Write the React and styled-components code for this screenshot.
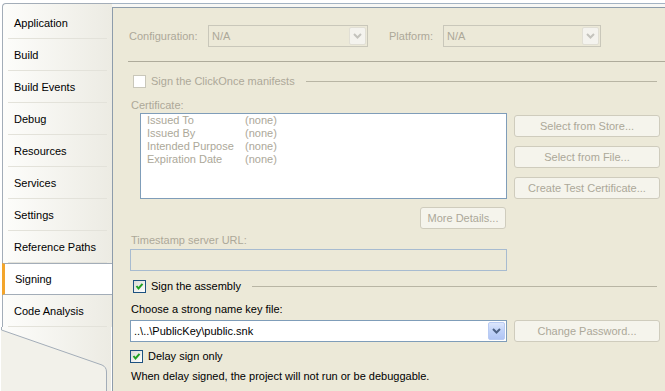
import styled, { createGlobalStyle } from "styled-components";

const GlobalStyle = createGlobalStyle`
  html, body {
    margin: 0;
    padding: 0;
    background: #ffffff;
  }
  body {
    font-family: "Liberation Sans", Arial, sans-serif;
    font-size: 11px;
    color: #000;
  }
`;

const tabs = [
  "Application",
  "Build",
  "Build Events",
  "Debug",
  "Resources",
  "Services",
  "Settings",
  "Reference Paths",
  "Signing",
  "Code Analysis",
];

const certFields = ["Issued To", "Issued By", "Intended Purpose", "Expiration Date"];

const Chevron = ({ color }) => (
  <svg width="9" height="6" viewBox="0 0 9 6">
    <path d="M1 1 L4.5 4.5 L8 1" fill="none" stroke={color} strokeWidth="2" />
  </svg>
);

const Check = () => (
  <svg width="11" height="11" viewBox="0 0 11 11">
    <path d="M2.5 5 L4.5 7.5 L8.5 2.8" fill="none" stroke="#21a121" strokeWidth="2" />
  </svg>
);

const SidebarFoot = () => (
  <svg width="110" height="64" viewBox="0 0 110 64">
    <defs>
      <linearGradient id="sideGrad" x1="0" x2="1" y1="0" y2="0">
        <stop offset="0" stopColor="#fdfdfb" />
        <stop offset="1" stopColor="#ecebe3" />
      </linearGradient>
    </defs>
    <rect x="0" y="0" width="110" height="64" fill="#f2f1ea" />
    <path d="M0 0 H110 V64 H105.5 V45 Q105.5 40 101 38 L0.5 3 Z" fill="url(#sideGrad)" />
    <path d="M0.5 0 V3 L101 38 Q105.5 40 105.5 45 V64" fill="none" stroke="#a3adb8" strokeWidth="1" />
  </svg>
);

const App = () => {
  return (
    <>
      <GlobalStyle />
      <Window>
        <Sidebar>
          <TabList>
            {tabs.map((t) => (
              <Tab key={t} $active={t === "Signing"}>
                {t}
              </Tab>
            ))}
          </TabList>
          <SidebarTail>
            <SidebarFoot />
          </SidebarTail>
        </Sidebar>

        <Main>
          <Panel>
            <ConfigRow>
              <Label $disabled $width={79}>Configuration:</Label>
              <Combo $width={160} $disabled>
                <ComboText>N/A</ComboText>
                <ComboArrow $disabled>
                  <Chevron color="#c4c3bd" />
                </ComboArrow>
              </Combo>
              <Label $disabled $width={54} style={{ marginLeft: 21 }}>
                Platform:
              </Label>
              <Combo $width={158} $disabled>
                <ComboText>N/A</ComboText>
                <ComboArrow $disabled>
                  <Chevron color="#c4c3bd" />
                </ComboArrow>
              </Combo>
            </ConfigRow>

            <Divider />

            <GroupHeader $top={13} $indent={4}>
              <CheckBox $disabled />
              <Label $disabled>Sign the ClickOnce manifests</Label>
              <Rule />
            </GroupHeader>

            <FieldLabel $disabled $top={11}>
              Certificate:
            </FieldLabel>

            <CertRow>
              <ListBox>
                {certFields.map((f) => (
                  <CertLine key={f}>
                    <span>{f}</span>
                    <span>(none)</span>
                  </CertLine>
                ))}
              </ListBox>
              <ButtonColumn>
                <Button $width={146}>Select from Store...</Button>
                <Button $width={146}>Select from File...</Button>
                <Button $width={146}>Create Test Certificate...</Button>
              </ButtonColumn>
            </CertRow>

            <MoreRow>
              <Button $width={86}>More Details...</Button>
            </MoreRow>

            <FieldLabel $disabled $top={5}>
              Timestamp server URL:
            </FieldLabel>
            <TextInput />

            <GroupHeader $top={9} $indent={4}>
              <CheckBox $checked>
                <Check />
              </CheckBox>
              <Label>Sign the assembly</Label>
              <Rule />
            </GroupHeader>

            <FieldLabel $top={10}>Choose a strong name key file:</FieldLabel>

            <KeyRow>
              <Combo $width={377}>
                <ComboText $enabled>..\..\PublicKey\public.snk</ComboText>
                <ComboArrow>
                  <Chevron color="#4d6185" />
                </ComboArrow>
              </Combo>
              <Button $width={146}>Change Password...</Button>
            </KeyRow>

            <GroupHeader $top={8} $indent={1}>
              <CheckBox $checked>
                <Check />
              </CheckBox>
              <Label>Delay sign only</Label>
            </GroupHeader>

            <FieldLabel $top={7}>
              When delay signed, the project will not run or be debuggable.
            </FieldLabel>
          </Panel>
        </Main>
      </Window>
    </>
  );
};

const Window = styled.div`
  display: flex;
  width: 665px;
  height: 391px;
  overflow: hidden;
  padding-top: 3px;
  box-sizing: border-box;
  background: #ffffff;
`;

const Sidebar = styled.div`
  display: flex;
  flex-direction: column;
  width: 110px;
  margin-left: 2px;
  flex-shrink: 0;
`;

const TabList = styled.div`
  display: flex;
  flex-direction: column;
  padding-top: 3px;
  border-top: 1px solid #a3adb8;
  border-left: 1px solid #a3adb8;
  border-top-left-radius: 4px;
  background: linear-gradient(to right, #fdfdfb, #ecebe3);
`;

const Tab = styled.div`
  display: flex;
  align-items: center;
  box-sizing: border-box;
  height: 32px;
  margin: ${(p) => (p.$active ? "0 0 0 -1px" : "0 5px 0 5px")};
  padding-left: ${(p) => (p.$active ? "10px" : "6px")};
  border-bottom: 1px solid ${(p) => (p.$active ? "#a3adb8" : "#e3e2da")};
  border-top: ${(p) => (p.$active ? "1px solid #a3adb8" : "none")};
  border-left: ${(p) => (p.$active ? "3px solid #f3a52c" : "none")};
  background: ${(p) => (p.$active ? "#ffffff" : "transparent")};
  color: #000;
  white-space: nowrap;
`;

const SidebarTail = styled.div`
  flex: 1;
  margin-left: -1px;
  line-height: 0;
  svg {
    display: block;
  }
`;

const Main = styled.div`
  flex: 1;
  display: flex;
  flex-direction: column;
  border-top: 1px solid #a3b3c3;
  padding-top: 3px;
  background: #f7f7f4;
`;

const Panel = styled.div`
  flex: 1;
  display: flex;
  flex-direction: column;
  align-items: flex-start;
  border-top: 1px solid #8d9cab;
  border-left: 1px solid #8d9cab;
  background: #ece9d8;
  padding: 17px 5px 0 16px;
`;

const ConfigRow = styled.div`
  display: flex;
  align-items: center;
  height: 22px;
`;

const Label = styled.span`
  display: inline-block;
  width: ${(p) => (p.$width ? `${p.$width}px` : "auto")};
  color: ${(p) => (p.$disabled ? "#aca899" : "#000")};
  white-space: nowrap;
  line-height: 13px;
`;

const Combo = styled.div`
  display: flex;
  align-items: stretch;
  box-sizing: border-box;
  width: ${(p) => p.$width}px;
  height: 22px;
  padding: 1px;
  border: 1px solid ${(p) => (p.$disabled ? "#c9c7ba" : "#7f9db9")};
  background: ${(p) => (p.$disabled ? "#ece9d8" : "#ffffff")};
`;

const ComboText = styled.span`
  flex: 1;
  display: flex;
  align-items: center;
  padding-left: 2px;
  color: ${(p) => (p.$enabled ? "#000" : "#aca899")};
  white-space: nowrap;
`;

const ComboArrow = styled.span`
  display: flex;
  align-items: center;
  justify-content: center;
  width: 17px;
  box-sizing: border-box;
  border: 1px solid ${(p) => (p.$disabled ? "#e1dfd5" : "#b9cbf3")};
  border-radius: 2px;
  background: ${(p) =>
    p.$disabled
      ? "#f4f3ee"
      : "linear-gradient(to bottom, #dde7fd, #c0d2f8 50%, #b1c5f4)"};
`;

const Divider = styled.div`
  align-self: stretch;
  height: 1px;
  margin: 14px -5px 0 -1px;
  background: #aeab9b;
`;

const GroupHeader = styled.div`
  align-self: stretch;
  display: flex;
  align-items: center;
  gap: 5px;
  height: 13px;
  margin-top: ${(p) => p.$top}px;
  padding-left: ${(p) => p.$indent}px;
`;

const CheckBox = styled.span`
  display: flex;
  align-items: center;
  justify-content: center;
  flex-shrink: 0;
  box-sizing: border-box;
  width: 13px;
  height: 13px;
  border: 1px solid ${(p) => (p.$disabled ? "#c9c7ba" : "#1c5180")};
  background: ${(p) =>
    p.$disabled ? "#ffffff" : "linear-gradient(135deg, #dcdcd5, #ffffff)"};
`;

const Rule = styled.span`
  flex: 1;
  height: 1px;
  margin: 0 3px 0 6px;
  background: #b8b5a4;
`;

const FieldLabel = styled.div`
  margin-top: ${(p) => p.$top}px;
  margin-left: 2px;
  line-height: 13px;
  color: ${(p) => (p.$disabled ? "#aca899" : "#000")};
  white-space: nowrap;
`;

const CertRow = styled.div`
  display: flex;
  align-items: flex-start;
  margin-top: 1px;
  padding-left: 11px;
`;

const ListBox = styled.div`
  box-sizing: border-box;
  width: 367px;
  height: 86px;
  padding: 0 6px;
  border: 1px solid #7f9db9;
  background: #ffffff;
  color: #aca899;
`;

const CertLine = styled.div`
  display: grid;
  grid-template-columns: 98px auto;
  line-height: 13px;
`;

const ButtonColumn = styled.div`
  display: flex;
  flex-direction: column;
  gap: 9px;
  padding-top: 2px;
  margin-left: 7px;
`;

const Button = styled.div`
  display: flex;
  align-items: center;
  justify-content: center;
  box-sizing: border-box;
  width: ${(p) => p.$width}px;
  height: 22px;
  border: 1px solid #cfccbd;
  border-radius: 3px;
  background: #f5f4ec;
  color: #aca899;
  white-space: nowrap;
`;

const MoreRow = styled.div`
  display: flex;
  justify-content: flex-end;
  width: 377px;
  margin-top: 8px;
`;

const TextInput = styled.div`
  box-sizing: border-box;
  width: 377px;
  height: 22px;
  margin: 2px 0 0 1px;
  border: 1px solid #a7bbd0;
  background: #ece9d8;
`;

const KeyRow = styled.div`
  display: flex;
  gap: 7px;
  margin: 4px 0 0 1px;
`;

export default App;
